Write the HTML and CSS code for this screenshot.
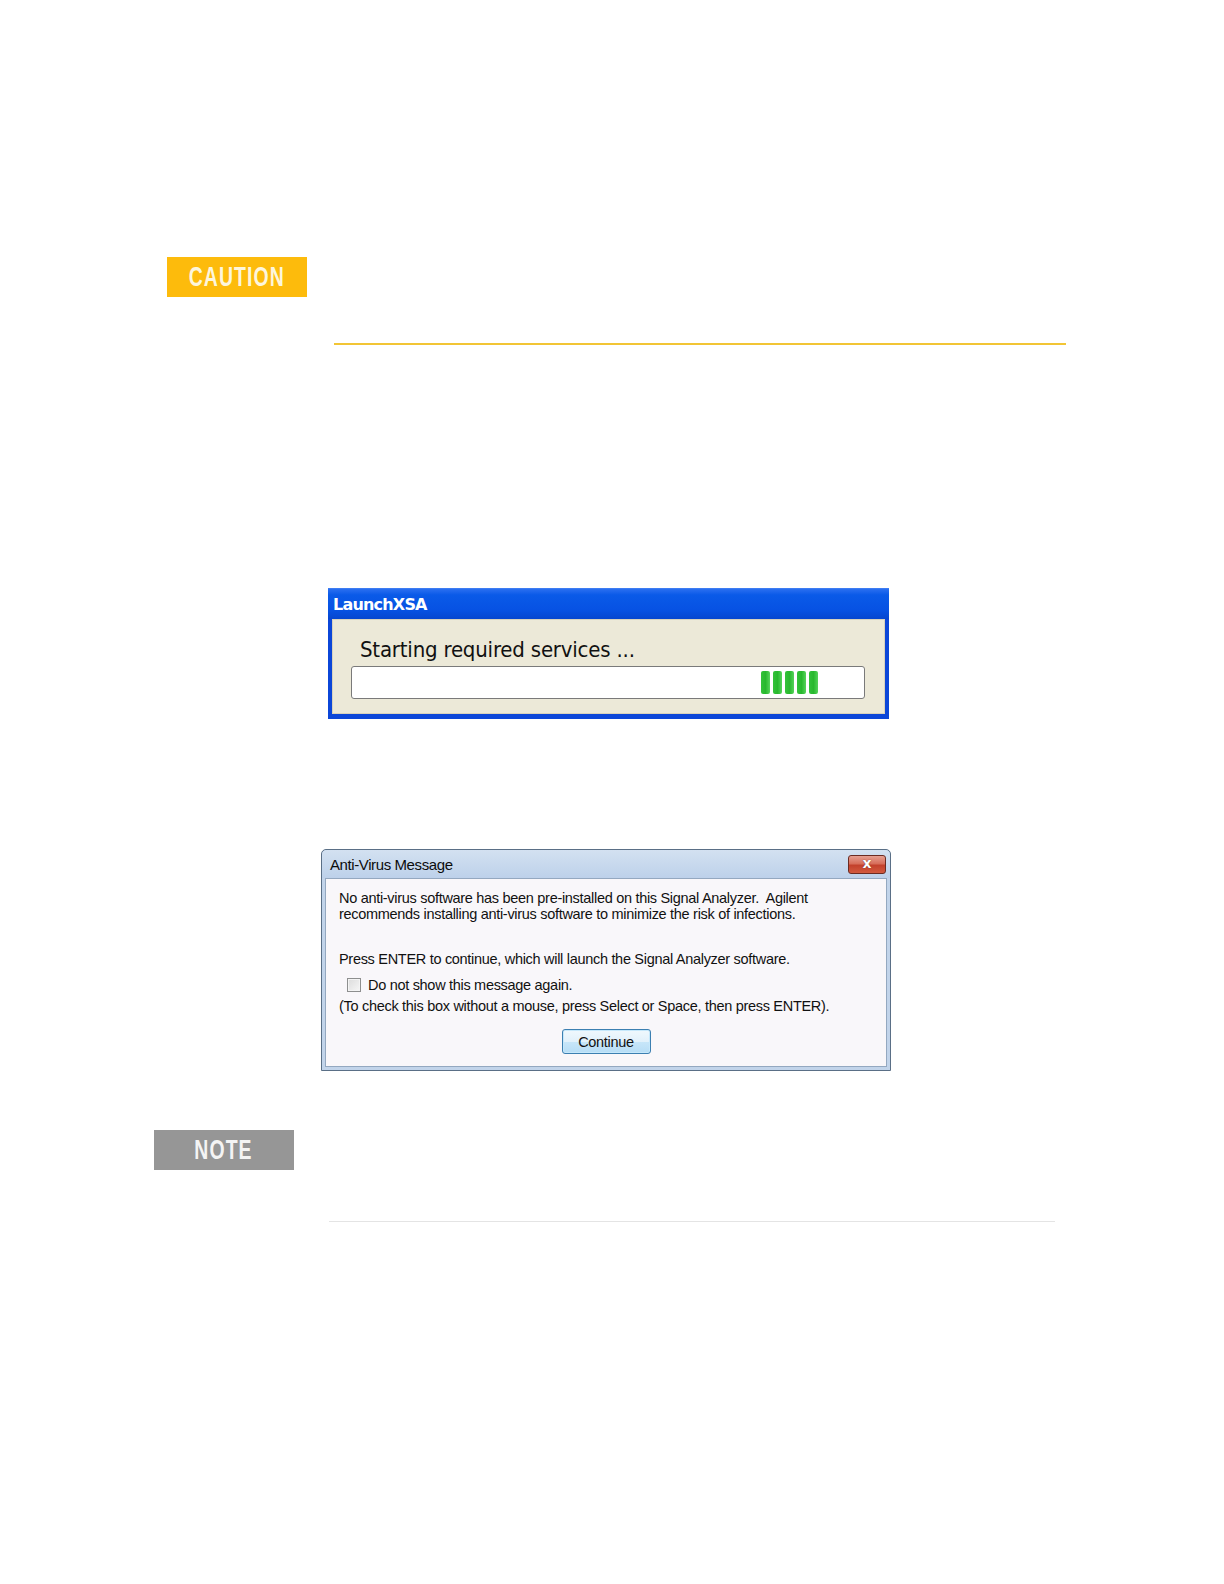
FILE: index.html
```html
<!DOCTYPE html>
<html lang="en">
<head>
  <meta charset="UTF-8" />
  <title>Anti-Virus Message</title>
  <link rel="stylesheet" href="styles.css">
</head>
<body>
  <div class="page">
    <!-- Caution -->
    <div class="badge caution"><span>CAUTION</span></div>
    <div class="rule rule-caution"></div>

    <!-- LaunchXSA window -->
    <div class="xp-win">
      <div class="xp-title">LaunchXSA</div>
      <div class="xp-body">
        <div class="xp-msg">Starting required services ...</div>
        <div class="xp-progress">
          <div class="blocks">
            <span></span><span></span><span></span><span></span><span></span>
          </div>
        </div>
      </div>
    </div>

    <!-- Anti-Virus window -->
    <div class="av-win">
      <div class="av-title">
        <span>Anti-Virus Message</span>
        <span class="av-close">x</span>
      </div>
      <div class="av-body">
        <p class="av-line">No anti-virus software has been pre-installed on this Signal Analyzer.&nbsp; Agilent<br>recommends installing anti-virus software to minimize the risk of infections.</p>
        <p class="av-line av-press">Press ENTER to continue, which will launch the Signal Analyzer software.</p>
        <div class="av-check"><span class="box"></span>Do not show this message again.</div>
        <p class="av-line">(To check this box without a mouse, press Select or Space, then press ENTER).</p>
        <div class="av-btn-row"><span class="av-btn">Continue</span></div>
      </div>
    </div>

    <!-- Note -->
    <div class="badge note"><span>NOTE</span></div>
    <div class="rule rule-note"></div>
  </div>
</body>
</html>
```

FILE: styles.css
```css
body {
  margin: 0;
  background: #fff;
  font-family: 'Liberation Sans', Arial, sans-serif;
}
.page {
  padding-top: 257px;
  padding-bottom: 200px;
}
.badge {
  width: 140px;
  height: 40px;
  display: flex;
  align-items: center;
  justify-content: center;
  font-family: 'Liberation Sans', Arial, sans-serif;
  font-weight: bold;
  font-size: 27px;
  letter-spacing: 1.5px;
}
.badge span {
  display: inline-block;
  transform: scaleX(0.72);
}
.caution {
  margin-left: 167px;
  background: #fdbb0c;
  color: #fdf6dc;
}
.note {
  margin-left: 154px;
  margin-top: 59px;
  background: #969696;
  color: #f4f4f4;
}
.rule-caution {
  margin: 46px 0 0 334px;
  width: 732px;
  height: 2px;
  background: #f2c535;
}
.rule-note {
  margin: 51px 0 0 329px;
  width: 726px;
  height: 1px;
  background: #e4e4e4;
}

/* LaunchXSA (XP style) */
.xp-win {
  margin: 243px 0 0 328px;
  width: 561px;
  height: 131px;
  box-sizing: border-box;
  background: #0b46d8;
  padding: 0 4px 5px 4px;
  display: flex;
  flex-direction: column;
}
.xp-title {
  height: 31px;
  margin: 0 -4px;
  padding-left: 5px;
  box-sizing: border-box;
  display: flex;
  align-items: center;
  color: #fff;
  font-family: 'DejaVu Sans', sans-serif;
  font-weight: bold;
  font-size: 16px;
  letter-spacing: -0.8px;
  background: linear-gradient(to bottom, #2a6ff0 0%, #0a5ae8 20%, #0752e3 70%, #0646cf 100%);
  border-top: 1px solid #3d7cf2;
}
.xp-body {
  flex: 1;
  background: #ece9d8;
  border: 1px solid #d8d2bd;
  padding: 17px 19px 0 18px;
}
.xp-msg {
  font-family: 'DejaVu Sans', sans-serif;
  font-stretch: condensed;
  font-size: 22px;
  color: #111;
  line-height: 26px;
  margin-left: 9px;
  letter-spacing: -0.2px;
}
.xp-progress {
  margin-top: 3px;
  height: 33px;
  box-sizing: border-box;
  background: #fff;
  border: 1px solid #7a7a7a;
  border-radius: 3px;
  display: flex;
  align-items: center;
}
.blocks {
  margin-left: 409px;
  display: flex;
  gap: 3px;
}
.blocks span {
  width: 9px;
  height: 23px;
  border-radius: 2px;
  background: linear-gradient(to right, #33c23a, #28b82e 50%, #55d35a);
}

/* Anti-Virus (Vista style) */
.av-win {
  margin: 130px 0 0 321px;
  width: 570px;
  height: 222px;
  box-sizing: border-box;
  border: 1px solid #5a6f86;
  border-radius: 5px 5px 0 0;
  background: #c2d4ea;
  padding: 0 3px 3px 3px;
  display: flex;
  flex-direction: column;
}
.av-title {
  height: 28px;
  margin: 0 -3px;
  padding: 0 4px 0 8px;
  display: flex;
  align-items: center;
  justify-content: space-between;
  font-family: 'Liberation Sans', sans-serif;
  font-size: 15px;
  letter-spacing: -0.4px;
  color: #0c0c0c;
  background: linear-gradient(to bottom, #d3e1f1, #bdd1ea);
  border-radius: 5px 5px 0 0;
}
.av-close {
  width: 38px;
  height: 19px;
  box-sizing: border-box;
  border: 1px solid #6b2b22;
  border-radius: 3px;
  background: linear-gradient(to bottom, #e6a092 0%, #d76e5a 45%, #c3412c 55%, #d25a3f 100%);
  color: #fff;
  font-family: 'DejaVu Sans', sans-serif;
  font-weight: bold;
  font-size: 14px;
  line-height: 15px;
  text-align: center;
  letter-spacing: 0;
  text-shadow: 0 0 1px #5a1a10;
}
.av-body {
  flex: 1;
  background: #f9f7fa;
  border: 1px solid #94a8c0;
  padding: 11px 0 0 13px;
  font-family: 'Liberation Sans', sans-serif;
  font-size: 14.5px;
  letter-spacing: -0.3px;
  color: #111;
}
.av-line {
  margin: 0;
  line-height: 16px;
}
.av-press {
  margin-top: 29px;
}
.av-check {
  margin: 10px 0 5px 8px;
  display: flex;
  align-items: center;
  gap: 7px;
  line-height: 16px;
}
.box {
  width: 12px;
  height: 12px;
  border: 1px solid #8e8f8f;
  background: linear-gradient(135deg, #dcdcdc, #f6f6f6);
  box-shadow: inset 0 0 0 1px #f4f4f4;
}
.av-btn-row {
  display: flex;
  justify-content: center;
  margin-top: 15px;
  padding-right: 13px;
}
.av-btn {
  width: 89px;
  height: 25px;
  box-sizing: border-box;
  border: 1px solid #3c7fb1;
  border-radius: 3px;
  background: linear-gradient(to bottom, #f0f8fd 0%, #e2f1fb 50%, #c8e6f9 51%, #b6ddf6 100%);
  box-shadow: inset 0 0 0 1px #c6e8fb;
  display: flex;
  align-items: center;
  justify-content: center;
}
```
